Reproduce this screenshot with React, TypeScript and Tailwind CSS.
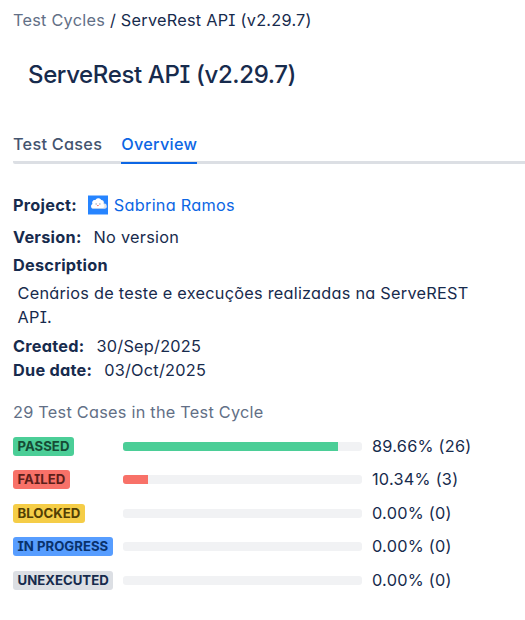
const rows = [
  { label: "PASSED", pct: 89.66, n: 26, badge: "bg-[#4bce97] text-[#164b35]", w: "w-[61px]", bar: "bg-[#4bce97]" },
  { label: "FAILED", pct: 10.34, n: 3, badge: "bg-[#f87168] text-[#5d1f1a]", w: "w-[57px]", bar: "bg-[#f87168]" },
  { label: "BLOCKED", pct: 0, n: 0, badge: "bg-[#f5cd47] text-[#533f04]", w: "w-[72px]", bar: "" },
  { label: "IN PROGRESS", pct: 0, n: 0, badge: "bg-[#579dff] text-[#09326c]", w: "w-[100px]", bar: "" },
  { label: "UNEXECUTED", pct: 0, n: 0, badge: "bg-[#dcdfe4] text-[#172b4d]", w: "w-[100px]", bar: "" },
];

function CloudAvatar() {
  return (
    <svg className="mr-[6px] ml-[11px]" width="20" height="20" viewBox="0 0 20 20">
      <path fill="#2684ff" d="M0 .5h20v19H0z" />
      <path fill="#dfe5ec" d="M4.500 13.800a2.500 2.500 0 0 1 .2-4.600A2.700 2.700 0 0 1 7.500 5a3.300 3.300 0 0 1 5.800 0 2.800 2.800 0 0 1 2.700 3.600 2.600 2.600 0 0 1 .4 5.200z" />
      <path fill="#fff" d="M4.500 13a2.200 2.200 0 0 1 .2-4.100A2.700 2.700 0 0 1 7.500 5a3.300 3.300 0 0 1 5.500 0 2.800 2.800 0 0 1 1.800 3.800 2.200 2.200 0 0 1 .2 4.200z" />
      <path fill="#344563" d="M7.700 8.500h.8v.9h-.8zM11.500 8.500h.8v.9h-.8z" />
      <path fill="#f15b50" d="M8.800 10h2.200l-1.100 1.300z" />
    </svg>
  );
}

export default function App() {
  return (
    <main className="h-[620px] w-[525px] overflow-hidden bg-white pl-[13px] font-['Inter',sans-serif] text-[16.300px] leading-6 tracking-[0.25px] text-[#172b4d] [font-feature-settings:'cv11','cv08']">
      <nav className="pt-2 whitespace-nowrap"><span className="text-[#626f86]">Test Cycles</span> / ServeRest API (v2.29.7)</nav>
      <h1 className="mt-[27px] pl-[15px] text-2xl leading-8 font-medium tracking-[-0.37px]">ServeRest API (v2.29.7)</h1>
      <div className="mt-[41px] flex h-8 gap-[19.100px] rounded-l-[2px] border-b-[3px] border-[#dcdfe4] font-medium">
        <span className="text-[#44546f]">Test Cases</span>
        <span className="h-[32px] border-b-2 border-[#0c66e4] text-[#0c66e4]">Overview</span>
      </div>
      <div className="mt-[29px] flex items-center">
        <b>Project:</b>
        <CloudAvatar />
        <span className="text-[#0c66e4]">Sabrina Ramos</span>
      </div>
      <div className="mt-2"><b className="mr-3">Version:</b>No version</div>
      <div className="mt-1"><b>Description</b></div>
      <p className="mt-1 w-[475px] pl-[4.500px]">Cenários de teste e execuções realizadas na ServeREST API.</p>
      <div className="mt-[5px]"><b className="mr-3">Created:</b>30/Sep/2025</div>
      <div><b className="mr-3">Due date:</b>03/Oct/2025</div>
      <h2 className="mt-[18px] text-[#626f86]">29 Test Cases in the Test Cycle</h2>
      <div className="mt-[10px]">
        {rows.map((r) => (
          <div key={r.label} className="flex h-[33.450px] items-start">
            <div className="w-[110px] pt-[3px]"><span className={`flex h-[19px] items-center rounded-[3px] pl-[4.500px] text-[13.200px] leading-[18px] font-bold tracking-normal whitespace-nowrap ${r.w} ${r.badge}`}><span className="-mt-px">{r.label}</span></span></div>
            <div className="mt-2 h-[9px] w-[239px] overflow-hidden rounded-[3px] bg-[#f1f2f4]"><div className={`h-full ${r.bar}`} style={{ width: `${r.pct > 0 ? r.pct + 0.3 : 0}%` }} /></div>
            <span className="ml-[10px]">{r.pct.toFixed(2)}% ({r.n})</span>
          </div>
        ))}
      </div>
    </main>
  );
}
